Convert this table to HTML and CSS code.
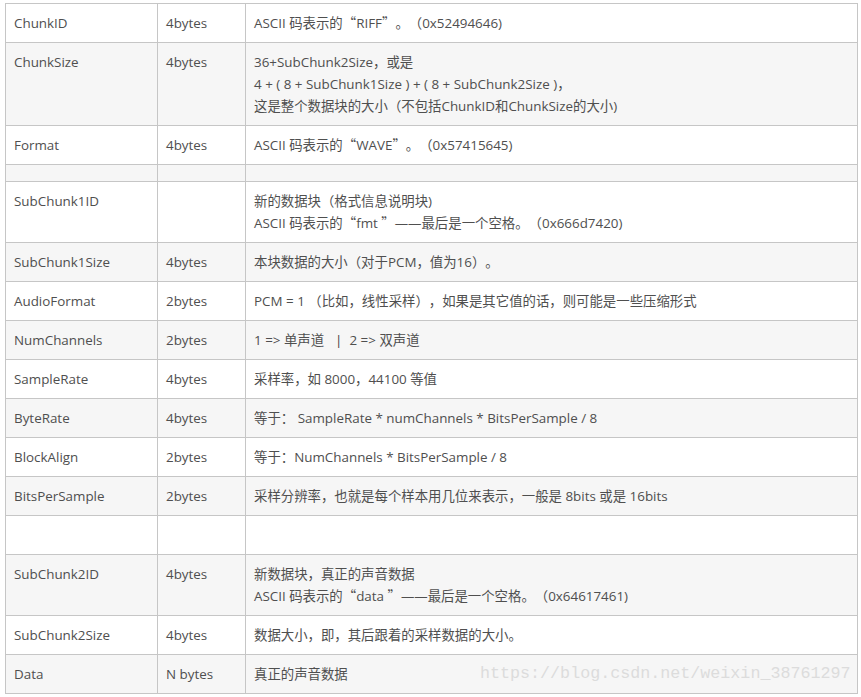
FILE: index.html
```html
<!DOCTYPE html>
<html lang="zh-CN">
<head>
<meta charset="utf-8">
<title>WAV header</title>
<link rel="stylesheet" href="styles.css">
</head>
<body>
<div class="wrap">
<table class="wav">
  <colgroup><col class="c1"><col class="c2"><col class="c3"></colgroup>
  <tbody>
    <tr><td>ChunkID</td><td>4bytes</td><td>ASCII 码表示的<span class="q">“</span>RIFF<span class="q">”</span>。（0x52494646)</td></tr>
    <tr><td>ChunkSize</td><td>4bytes</td><td>36+SubChunk2Size，或是<br>4 + ( 8 + SubChunk1Size ) + ( 8 + SubChunk2Size )，<br>这是整个数据块的大小（不包括ChunkID和ChunkSize的大小)</td></tr>
    <tr><td>Format</td><td>4bytes</td><td>ASCII 码表示的<span class="q">“</span>WAVE<span class="q">”</span>。（0x57415645)</td></tr>
    <tr class="spacer"><td></td><td></td><td></td></tr>
    <tr><td>SubChunk1ID</td><td></td><td>新的数据块（格式信息说明块)<br>ASCII 码表示的<span class="q">“</span>fmt <span class="q">”</span>——最后是一个空格。（0x666d7420)</td></tr>
    <tr><td>SubChunk1Size</td><td>4bytes</td><td>本块数据的大小（对于PCM，值为16）。</td></tr>
    <tr><td>AudioFormat</td><td>2bytes</td><td>PCM = 1 （比如，线性采样），如果是其它值的话，则可能是一些压缩形式</td></tr>
    <tr><td>NumChannels</td><td>2bytes</td><td>1 =&gt; 单声道<span class="bar">|</span>2 =&gt; 双声道</td></tr>
    <tr><td>SampleRate</td><td>4bytes</td><td>采样率，如 8000，44100 等值</td></tr>
    <tr><td>ByteRate</td><td>4bytes</td><td>等于： SampleRate * numChannels * BitsPerSample / 8</td></tr>
    <tr><td>BlockAlign</td><td>2bytes</td><td>等于：NumChannels * BitsPerSample / 8</td></tr>
    <tr><td>BitsPerSample</td><td>2bytes</td><td>采样分辨率，也就是每个样本用几位来表示，一般是 8bits 或是 16bits</td></tr>
    <tr><td>&nbsp;</td><td></td><td></td></tr>
    <tr><td>SubChunk2ID</td><td>4bytes</td><td>新数据块，真正的声音数据<br>ASCII 码表示的<span class="q">“</span>data <span class="q">”</span>——最后是一个空格。（0x64617461)</td></tr>
    <tr><td>SubChunk2Size</td><td>4bytes</td><td>数据大小，即，其后跟着的采样数据的大小。</td></tr>
    <tr><td>Data</td><td>N bytes</td><td>真正的声音数据</td></tr>
  </tbody>
</table>
<div class="watermark">https://blog.csdn.net/weixin_38761297</div>
</div>
</body>
</html>
```
FILE: styles.css
```css
html, body {
  margin: 0;
  padding: 0;
  background: #ffffff;
}
.wrap {
  position: relative;
  padding: 3px 5px 0 5px;
  width: 851px;
}
.wav {
  border-collapse: collapse;
  width: 852px;
  table-layout: fixed;
  font-family: "Open Sans", "Noto Sans CJK SC", sans-serif;
  font-size: 13.4px;
  color: #4f4f4f;
  text-spacing-trim: space-all;
}
.c1 { width: 152px; }
.c2 { width: 88px; }
.c3 { width: 612px; }
.wav td {
  border: 1px solid #c6c6c6;
  padding: 8px 8px;
  line-height: 22px;
  vertical-align: top;
  text-align: left;
}
.wav tr:nth-child(even) td {
  background: #f6f6f6;
}
.wav tr.spacer td {
  padding: 8px 8px 8px 8px;
  line-height: 0;
}
.q {
  font-family: "Noto Sans CJK SC", sans-serif;
  line-height: 12px;
}
.bar {
  display: inline-block;
  margin: 0 7px 0 11px;
  color: #3a3a3a;
}
.watermark {
  position: absolute;
  left: 480px;
  top: 662px;
  font-family: "Liberation Mono", "DejaVu Sans Mono", monospace;
  font-size: 16.7px;
  line-height: 24px;
  color: #dcdcdc;
  white-space: nowrap;
}
```
